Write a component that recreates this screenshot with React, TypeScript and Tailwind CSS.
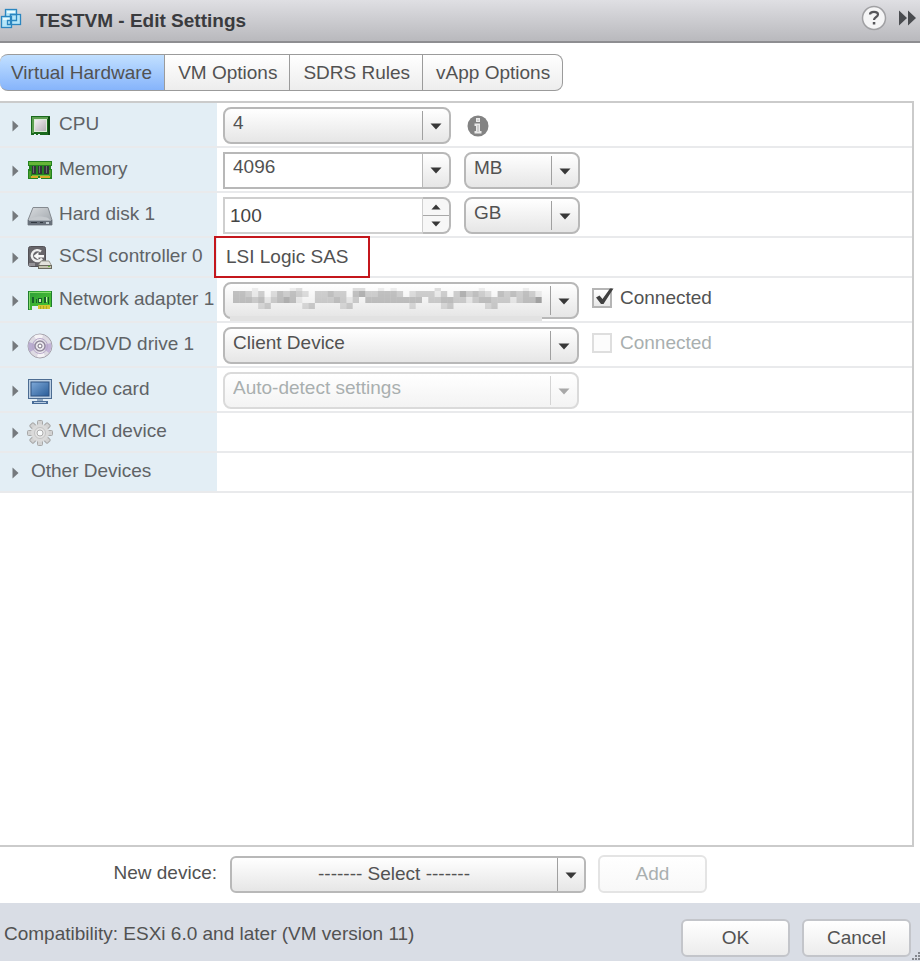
import { useState, type ReactNode } from 'react'
import clsx from 'clsx'

interface Device {
  id: string
  name: string
  icon?: ReactNode
  field?: ReactNode
  compact?: boolean
}

const tabs = ['Virtual Hardware', 'VM Options', 'SDRS Rules', 'vApp Options']

// Shade of each block of the masked network name, 0 is empty
const maskRows = [
  '0001000001200000000220010100000020000001000000100',
  '4431302434320334330453344430233313035343204343431',
  '4443413454100333431304444444440334433134433313446',
  '0000230000023000023000000000200002300000230000000',
]
const maskTops = [0, 3, 9, 15]

function Caret({ up = false, className }: { up?: boolean; className?: string }) {
  return (
    <svg viewBox="0 0 12 7" className={clsx('pointer-events-none', className)} fill="currentColor" aria-hidden="true">
      <path d={up ? 'M6 0.5 11.5 6.5H0.5Z' : 'M0.5 0.5h11L6 6.5Z'} />
    </svg>
  )
}

interface DropdownProps {
  id: string
  options: string[]
  className?: string
  label?: string
  disabled?: boolean
  centered?: boolean
  children?: ReactNode
}

function Dropdown({ id, options, className, label, disabled, centered, children }: DropdownProps) {
  return (
    <div className={clsx('relative h-[37px]', className)}>
      <select
        id={id}
        aria-label={label}
        disabled={disabled}
        className={clsx(
          'block h-full w-full appearance-none border-2 bg-linear-to-b from-white pr-8 text-[19px]',
          centered ? 'rounded-md pl-1 text-center' : 'rounded-lg pb-1.5 pl-2',
          disabled ? 'border-[#dadada] to-[#f3f3f3] text-[#a9afaf] opacity-100' : 'border-[#b8b8b8] to-[#e6e6e6] text-[#525252]',
        )}
      >
        {options.map(o => (
          <option key={o}>{o}</option>
        ))}
      </select>
      {children}
      <span
        className={clsx(
          'pointer-events-none absolute right-7 w-px',
          centered ? 'inset-y-0.5' : 'inset-y-1',
          disabled ? 'bg-[#d4d4d4]' : 'bg-[#a0a0a0]',
        )}
      />
      <Caret className={clsx('absolute top-4 right-[9px] h-[7px] w-3', disabled ? 'text-[#a8a8a8]' : 'text-[#383838]')} />
    </div>
  )
}

function NameMask() {
  return (
    <svg viewBox="0 0 312 35" preserveAspectRatio="none" className="pointer-events-none absolute top-[5px] left-[7px] h-[35px] w-[312px]" aria-hidden="true">
      <rect x="0" y="29" width="312" height="5" fill="#e2e2e2" />
      {maskRows.map((row, r) =>
        row.split('').map((shade, c) =>
          shade === '0' ? null : (
            <rect
              key={`${r}-${c}`}
              x={3 + c * 6.3}
              y={maskTops[r] + 1}
              width="6.3"
              height={r === 0 ? 3 : 6}
              fill="#6b6b6b"
              opacity={Number(shade) * 0.1}
            />
          ),
        ),
      )}
    </svg>
  )
}

function CpuIcon() {
  return (
    <svg viewBox="0 0 26 26" className="size-[26px]">
      <defs>
        <linearGradient id="chip" x1="0" y1="0" x2="1" y2="1">
          <stop offset="0" stopColor="#f4f0f4" />
          <stop offset="1" stopColor="#b2adb4" />
        </linearGradient>
      </defs>
      <path d="M4 3h19v19H13v-1h-2v1H9v-1H7v1H4Z" fill="#19691c" />
      <path d="M5 4h16v2H7v14H5Z" fill="#5fa052" />
      <path d="M21 4h2v18h-2Z" fill="#0d4711" />
      <rect x="7.500" y="6.500" width="12" height="12" fill="url(#chip)" stroke="#dcebd8" />
    </svg>
  )
}

function MemoryIcon() {
  return (
    <svg viewBox="0 0 26 26" className="size-[26px]">
      <path d="M1 3h24v5h-1v3h1v10H14v-1h-3v1H1V11h1V8H1Z" fill="#24831f" />
      <path d="M2 4h22v3H2Z" fill="#65b538" />
      <path d="M2 13h2v7H2Zm20-1h2v7h-2Z" fill="#4da02d" />
      <path d="M5 8h4v8H5Zm6 0h4v8h-4Zm6 0h5v8h-5Z" fill="#31343a" />
      <path d="M6 8h1v7H6Zm6 0h1v7h-1Zm7 0h1v7h-1Z" fill="#6b6c70" />
      <path d="M4 18h7v2H4Zm9 0h10v2H13Z" fill="#d9a928" />
      <path d="M5 17h17v1H5Z" fill="#7bbc3c" />
    </svg>
  )
}

function DiskIcon() {
  return (
    <svg viewBox="0 0 26 26" className="size-[26px]">
      <defs>
        <linearGradient id="disk" x1="0" y1="0" x2="1" y2="1">
          <stop offset="0" stopColor="#d8dbde" />
          <stop offset="1" stopColor="#9da3a9" />
        </linearGradient>
      </defs>
      <path d="M6 4.500h15l4 12.500v5H1v-5Z" fill="url(#disk)" stroke="#858a90" />
      <path d="M5 15c4-2 11-2 16 0l2 2H3Z" fill="#c5c9cd" />
      <path d="M1 17h24v5H1Z" fill="#68707a" />
      <path d="M2 17h22v1H2Z" fill="#a5acb3" />
      <path d="M4 19h6v1H4Zm9 0h3v1h-3Z" fill="#313840" />
      <path d="M19 19h3v2h-3Z" fill="#c4cdd4" />
    </svg>
  )
}

function ScsiIcon() {
  return (
    <svg viewBox="0 0 26 26" className="size-[26px]">
      <rect x="1.500" y="1.500" width="17" height="20" rx="2" fill="#67656a" stroke="#535156" />
      <path d="M14 6.500a5.500 5.500 0 1 0 1 7" fill="none" stroke="#efefef" strokeWidth="2.400" />
      <path d="m6.500 11 5-4v3H17v2.500h-5.500V15Z" fill="#f8f8f8" />
      <path d="M2 18h6v3H2Z" fill="#969499" />
      <path d="m14 16-2.500 4.500h13L22 16Z" fill="#e3e2dc" stroke="#9a998f" />
      <path d="M11 20h14v4H11Z" fill="#6b6a60" />
      <path d="M12 21h12v2H12Z" fill="#c4c3ae" />
      <path d="M21 21h2v1h-2Z" fill="#6db543" />
    </svg>
  )
}

function NetworkIcon() {
  return (
    <svg viewBox="0 0 26 26" className="size-[26px]">
      <defs>
        <linearGradient id="nic" x1="0" y1="0" x2="1" y2="1">
          <stop offset="0" stopColor="#2d9d3b" />
          <stop offset="1" stopColor="#4fc92e" />
        </linearGradient>
      </defs>
      <path d="M1 3h24v16h-2v2H11v-3H5v4H1Z" fill="url(#nic)" />
      <path d="M2 4h22v1H3v16H2Z" fill="#86dc6d" />
      <path d="M5 9h2v6H5Zm4 2h1v4H9Zm2-1h4v5h-4Zm6-1h2v6h-2Zm4 0h1v7h-1Z" fill="#175f2b" />
      <path d="M12 11h2v3h-2Zm7-2h1v5h-1Z" fill="#c6efae" />
      <path d="M11 17h12v4H11Z" fill="#d5c62f" />
      <path d="M13 18h1v3h-1Zm3 0h1v3h-1Zm3 0h1v3h-1Z" fill="#a9ab22" />
      <path d="M1 3h1v19H1Zm24 0v16h-1V3Z" fill="#207c30" />
    </svg>
  )
}

function DiscIcon() {
  return (
    <svg viewBox="0 0 26 26" className="size-[26px]">
      <circle cx="13" cy="13" r="12" fill="#dedbe3" stroke="#a5a2ab" />
      <path d="M13 13 2 9a12 12 0 0 0 1 10Z" fill="#b9add0" />
      <path d="m13 13 11-3a12 12 0 0 1-2 10Z" fill="#c2b3d6" />
      <path d="M13 13 7 3a12 12 0 0 1 9-1Zm0 0 5 10a12 12 0 0 1-8 1Z" fill="#f5f3f6" />
      <circle cx="13" cy="13" r="7.500" fill="none" stroke="#b7a7c9" />
      <circle cx="13" cy="13" r="5" fill="#e9e6ec" stroke="#8f8699" strokeWidth="1.300" />
      <circle cx="13" cy="13" r="2" fill="#fff" stroke="#777080" />
    </svg>
  )
}

function MonitorIcon() {
  return (
    <svg viewBox="0 0 26 26" className="size-[26px]">
      <defs>
        <linearGradient id="screen" x1="0" y1="0" x2="1" y2="1">
          <stop offset="0" stopColor="#7fa9d8" />
          <stop offset="1" stopColor="#295c98" />
        </linearGradient>
      </defs>
      <rect x="1.500" y="1.500" width="23" height="19" fill="#bccfe3" stroke="#4c6c92" />
      <rect x="4" y="4" width="18" height="14" fill="url(#screen)" stroke="#2e5381" />
      <path d="M10 21h6v2h-6Z" fill="#8fa7c1" />
      <path d="M5 23h16v3H5Z" fill="#486c97" />
      <path d="M7 24h12v1H7Z" fill="#b7cbe0" />
    </svg>
  )
}

function GearIcon() {
  return (
    <svg viewBox="0 0 26 26" className="size-[26px]">
      <g fill="#d2d2d2" stroke="#a8a8a8" strokeWidth="1">
        {[0, 45, 90, 135].map(a => (
          <rect key={a} x="10.500" y="0.500" width="5" height="25" rx="1" transform={`rotate(${a} 13 13)`} />
        ))}
      </g>
      <circle cx="13" cy="13" r="9" fill="#dadada" />
      <circle cx="13" cy="13" r="5.500" fill="#e4e4e4" stroke="#c3c3c3" />
      <circle cx="13" cy="13" r="3" fill="#f8fafb" stroke="#adadad" />
    </svg>
  )
}

function VmIcon() {
  return (
    <svg viewBox="0 0 22 22" className="size-[22px]" fill="#b5e6f8" stroke="#2b86c0" strokeWidth="1.300">
      <rect x="5.500" y="1.500" width="11" height="11" />
      <rect x="10.500" y="6.500" width="10" height="10" />
      <rect x="1.500" y="8.500" width="10" height="11" />
      <path d="M7 3h8v2H7ZM3 10h7v2H3Z" fill="#e9fbff" stroke="none" />
      <path d="M5.500 8.500v-2M10.500 6.500v10h-3v-4h9v-6Z" fill="none" />
    </svg>
  )
}

function InfoIcon() {
  return (
    <svg viewBox="0 0 22 22" className="size-[22px]">
      <circle cx="11" cy="11" r="10.500" fill="#838383" />
      <path d="M9 3h4v4H9ZM7.500 8.500H13V16h1.500v2.500h-7V16H9v-5H7.500Z" fill="#e9e9e9" />
      <path d="M10.500 4.500h1V6h-1ZM10.500 10h1v7h-1Z" fill="#b4b4b4" />
    </svg>
  )
}

function Connected({ id, disabled = false }: { id: string; disabled?: boolean }) {
  const [checked, setChecked] = useState(!disabled)
  return (
    <label htmlFor={id} className={clsx('relative mb-1.5 ml-[13px] flex items-center gap-2', disabled ? 'text-[#a9afaf]' : 'text-[#525252]')}>
      <input
        id={id}
        type="checkbox"
        checked={checked}
        disabled={disabled}
        onChange={e => setChecked(e.target.checked)}
        className={clsx(
          'size-5 appearance-none border-2',
          disabled ? 'border-[#dedede] bg-[#fcfcfc]' : 'border-[#b5b5b5] bg-linear-to-b from-white to-[#e8e8e8]',
        )}
      />
      {checked && (
        <svg viewBox="0 0 20 20" className="pointer-events-none absolute left-0.5 size-5" aria-hidden="true">
          <path d="M2 9.500 5.500 7.500 8.500 11 16 0.500h3.500L9.500 16H7Z" fill="#404040" />
        </svg>
      )}
      Connected
    </label>
  )
}

const devices: Device[] = [
  {
    id: 'cpu',
    name: 'CPU',
    icon: <CpuIcon />,
    field: (
      <>
        <Dropdown id="cpu" options={['4', '1', '2', '8']} className="w-[228px]" />
        <button type="button" aria-label="CPU information" className="ml-4">
          <InfoIcon />
        </button>
      </>
    ),
  },
  {
    id: 'memory',
    name: 'Memory',
    icon: <MemoryIcon />,
    field: (
      <>
        <div className="flex h-[37px] w-[228px]">
          <input
            id="memory"
            defaultValue="4096"
            className="min-w-0 flex-1 border-2 border-r border-[#b8b8b8] bg-white pb-2 pl-2 text-[#525252]"
          />
          <button
            type="button"
            aria-label="Memory presets"
            className="flex w-7 items-center justify-center rounded-r-lg border-2 border-l-0 border-[#b8b8b8] bg-linear-to-b from-white to-[#e6e6e6]"
          >
            <Caret className="h-[7px] w-3 text-[#383838]" />
          </button>
        </div>
        <Dropdown id="memory-unit" label="Memory unit" options={['MB', 'GB']} className="ml-[13px] w-[116px]" />
      </>
    ),
  },
  {
    id: 'disk',
    name: 'Hard disk 1',
    icon: <DiskIcon />,
    field: (
      <>
        <div className="flex h-[37px] w-[228px]">
          <input
            id="disk"
            defaultValue="100"
            className="min-w-0 flex-1 border-2 border-r border-[#cfcfcf] bg-white pl-[5px] text-[#444444]"
          />
          <div className="flex w-7 flex-col overflow-hidden rounded-r-lg border-2 border-l-0 border-[#b8b8b8] bg-[#f7f7f7]">
            <button type="button" aria-label="Increase" className="flex flex-1 items-center justify-center border-b border-[#a8a8a8]">
              <Caret up className="h-[6px] w-[10px] text-[#383838]" />
            </button>
            <button type="button" aria-label="Decrease" className="flex flex-1 items-center justify-center">
              <Caret className="h-[6px] w-[10px] text-[#383838]" />
            </button>
          </div>
        </div>
        <Dropdown id="disk-unit" label="Disk unit" options={['GB', 'MB', 'TB']} className="ml-[13px] w-[116px]" />
      </>
    ),
  },
  {
    id: 'scsi',
    name: 'SCSI controller 0',
    icon: <ScsiIcon />,
    compact: true,
    field: (
      <>
        <span className="mb-0.5 pl-[3px] text-[#525252]">LSI Logic SAS</span>
        <span className="pointer-events-none absolute -inset-y-[2px] -left-[3px] w-[156px] border-2 border-[#c4161c]" />
      </>
    ),
  },
  {
    id: 'network',
    name: 'Network adapter 1',
    icon: <NetworkIcon />,
    field: (
      <>
        <Dropdown id="network" options={['']} className="w-[356px]">
          <NameMask />
        </Dropdown>
        <Connected id="network-connected" />
      </>
    ),
  },
  {
    id: 'cd',
    name: 'CD/DVD drive 1',
    icon: <DiscIcon />,
    field: (
      <>
        <Dropdown id="cd" options={['Client Device']} className="w-[356px]" />
        <Connected id="cd-connected" disabled />
      </>
    ),
  },
  {
    id: 'video',
    name: 'Video card',
    icon: <MonitorIcon />,
    field: <Dropdown id="video" options={['Auto-detect settings']} className="w-[356px]" disabled />,
  },
  { id: 'vmci', name: 'VMCI device', icon: <GearIcon />, compact: true },
  { id: 'other', name: 'Other Devices', compact: true },
]

function DeviceRow({ device }: { device: Device }) {
  const hasControl = device.field && !device.compact
  return (
    <li className={clsx('flex border-b-2 border-[#e9eaec]', device.compact ? 'min-h-10' : 'min-h-[45px]')}>
      <div className="flex w-[217px] shrink-0 items-center bg-[#e3eef5] pt-0.5 pl-3 whitespace-nowrap text-[#5f6366]">
        <button type="button" aria-label={`Expand ${device.name}`} className="mr-2">
          <svg viewBox="0 0 7 12" className="h-3 w-[7px]">
            <path d="M0.500 0.500 6.500 6l-6 5.500Z" fill="#75797d" />
          </svg>
        </button>
        {device.icon}
        {hasControl ? (
          <label htmlFor={device.id} className="mb-1 ml-[6px]">
            {device.name}
          </label>
        ) : (
          <span className={clsx('mb-1', device.icon ? 'ml-[6px]' : 'ml-1')}>{device.name}</span>
        )}
      </div>
      <div className="relative flex flex-1 items-center pt-1 pb-0.5 pl-[6px]">{device.field}</div>
    </li>
  )
}

function PushButton({ children, disabled }: { children: ReactNode; disabled?: boolean }) {
  return (
    <button
      type="button"
      disabled={disabled}
      className={clsx(
        'h-[38px] w-[109px] rounded-md border-2 bg-linear-to-b from-white',
        disabled ? 'border-[#e4e4e4] to-[#f8f8f8] text-[#a9afaf]' : 'border-[#c3c5ca] to-[#ececec] text-[#525252]',
      )}
    >
      {children}
    </button>
  )
}

export default function App() {
  const [active, setActive] = useState(tabs[0])

  return (
    <div className="flex min-h-screen flex-col bg-white font-['Liberation_Sans',Arial,sans-serif] text-[19px] leading-6">
      <header className="flex h-[43px] items-center border-b-2 border-[#8e8e91] bg-linear-to-b from-[#dfdfe3] to-[#b9b9bd]">
        <div className="mb-1">
          <VmIcon />
        </div>
        <h1 className="ml-[14px] flex-1 font-bold text-[#3a3b3e]">TESTVM - Edit Settings</h1>
        <button type="button" aria-label="Help" className="mb-1.5">
          <svg viewBox="0 0 26 26" className="size-[26px]">
            <circle cx="13" cy="13" r="11.500" fill="#f5f5f6" stroke="#a0a0a3" strokeWidth="1.500" />
            <path d="M9 9.500c0-3.500 8-3.500 8 0 0 2.500-4 2.500-4 5.500" fill="none" stroke="#56565a" strokeWidth="2.200" />
            <rect x="11.800" y="17" width="2.500" height="2.500" fill="#56565a" />
          </svg>
        </button>
        <button type="button" aria-label="Collapse" className="mr-[3px] mb-1.5 ml-3">
          <svg viewBox="0 0 18 16" className="h-4 w-[18px]" fill="#4a4c50">
            <path d="M0 0.500 8 8 0 15.500ZM9 0.500 17 8l-8 7.500Z" />
          </svg>
        </button>
      </header>

      <nav role="tablist" className="mt-[11px] flex self-start">
        {tabs.map(tab => (
          <button
            key={tab}
            type="button"
            role="tab"
            aria-selected={tab === active}
            onClick={() => setActive(tab)}
            className={clsx(
              'h-[37px] border border-l-0 border-[#9b9b9b] pr-3 pl-[13px] text-[#525252] first:rounded-l-lg first:pl-[11px] last:rounded-r-lg',
              tab === active
                ? 'bg-linear-to-b from-[#c2e0ff] to-[#86b4fb]'
                : 'bg-linear-to-b from-white to-[#ededed]',
            )}
          >
            {tab}
          </button>
        ))}
      </nav>

      <main className="mt-[10px] mr-[6px] flex-1 border-2 border-l-0 border-[#cbcbcb]">
        <ul>
          {devices.map(d => (
            <DeviceRow key={d.id} device={d} />
          ))}
        </ul>
      </main>

      <div className="flex items-center px-3 pt-2 pb-[10px]">
        <label htmlFor="new-device" className="w-[218px] pr-[13px] pb-0.5 text-right text-[#525252]">
          New device:
        </label>
        <Dropdown id="new-device" options={['------- Select -------']} className="mr-3 w-[356px]" centered />
        <PushButton disabled>Add</PushButton>
      </div>

      <footer className="relative flex h-[58px] items-center gap-3 bg-[#d9dde5] pt-3 pr-[9px] pl-1">
        <p className="mb-2 flex-1 text-[#525252]">Compatibility: ESXi 6.0 and later (VM version 11)</p>
        <PushButton>OK</PushButton>
        <PushButton>Cancel</PushButton>
        <svg viewBox="0 0 9 9" className="absolute right-0 bottom-0 size-[9px]" fill="#85888e" aria-hidden="true">
          <path d="M7 0h2v2H7ZM4 3h2v2H4Zm3 0h2v2H7ZM1 6h2v2H1Zm3 0h2v2H4Zm3 0h2v2H7Z" />
        </svg>
      </footer>
    </div>
  )
}
